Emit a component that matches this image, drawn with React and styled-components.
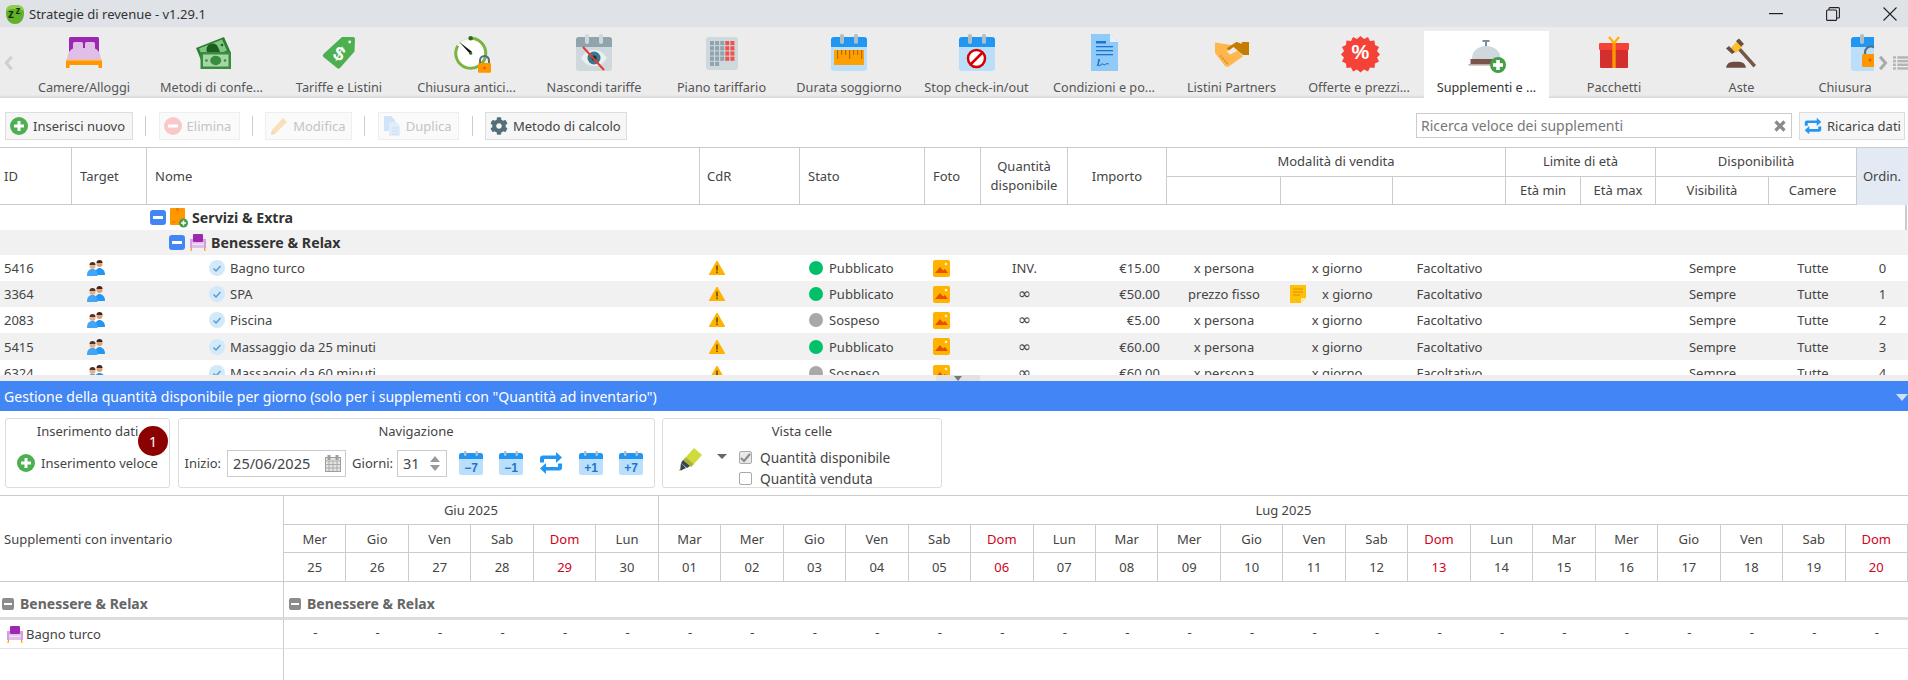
import React from "react";
import styled, { createGlobalStyle } from "styled-components";
import { FaCog } from "react-icons/fa";

const Global = createGlobalStyle`
  html, body { margin: 0; padding: 0; height: 680px; overflow: hidden; background: #fff; }
  body { font-family: "Noto Sans", "Open Sans", sans-serif; font-size: 13px; color: #444; }
  * { box-sizing: border-box; }
`;

const Page = styled.div`width: 1908px; height: 680px; overflow: hidden; display: flex; flex-direction: column;`;

/* Title bar */
const TitleBar = styled.header`height: 27px; flex: none; background: #dfe2e6; display: flex; align-items: center; padding-left: 5px; color: #333; font-size: 13px;`;
const TitleText = styled.span`margin-left: 4px; flex: 1;`;
const WinControls = styled.div`display: flex; align-items: center; gap: 43px; padding-right: 11px;`;

/* Tabs */
const TabBar = styled.nav`height: 71px; flex: none; background: #ececec; display: flex; padding-top: 4px; box-shadow: inset 0 -3px 3px -2px rgba(0,0,0,.12);`;
const ArrowSlot = styled.div`width: ${p => p.$w}px; flex: none; display: flex; align-items: center; gap: 4px; overflow: hidden; padding: 0 0 4px ${p => p.$pad || 0}px;`;
const Tabs = styled.div`flex: 1; display: flex; gap: 2.5px; overflow: hidden; min-width: 0;`;
const Tab = styled.div`width: 125px; flex: none; padding-top: 2px; display: flex; flex-direction: column; align-items: center; background: ${p => p.$active ? "#fff" : "transparent"}; color: ${p => p.$active ? "#333" : "#555"};`;
const TabIcon = styled.svg`width: 38px; height: 38px; flex: none; display: block; overflow: visible;`;
const TabLabel = styled.span`margin-top: 7px; line-height: 18px; font-size: 12.7px; white-space: nowrap; padding-right: ${p => p.$shift || 0}px;`;

/* Toolbar */
const Toolbar = styled.div`height: 49px; flex: none; display: flex; align-items: flex-start; padding: 14px 3px 0 5px;`;
const Btn = styled.button`height: 28px; width: ${p => p.$w}px; flex: none; border: 1px solid ${p => p.disabled ? "#eee" : "#ddd"}; background: ${p => p.disabled ? "#fafafa" : "#f6f6f6"}; color: ${p => p.disabled ? "#c4c4c4" : "#444"}; font: inherit; display: flex; align-items: center; gap: 5px; padding: 0 0 0 4px; white-space: nowrap;`;
const Sep = styled.span`width: 1px; height: 20px; margin: 4px 12.3px 0; background: #ccc; flex: none;`;
const Search = styled.div`margin: 1px 7px 0 auto; width: 376px; height: 25px; border: 1px solid #ccc; display: flex; align-items: center; justify-content: space-between; padding: 0 5px 0 4px; color: #777; font-size: 14px;`;

/* Main table */
const cols = "72px 75px 553px 100px 125px 56px 87px 99px 114px 112px 113px 75px 75px 113px 88px 51px";
const Head = styled.div`height: 58px; flex: none; display: grid; grid-template-columns: ${cols}; grid-template-rows: 29px 29px; border-top: 1px solid #ccc; border-bottom: 1px solid #ccc;`;
const HeadCell = styled.div`grid-row: span ${p => p.$rows || 1}; grid-column: span ${p => p.$cols || 1}; display: flex; align-items: center; justify-content: ${p => p.$left ? "flex-start" : "center"}; text-align: center; line-height: 19px; padding: 0 0 2px ${p => p.$left || 0}px; border-right: 1px solid ${p => p.$noline ? "transparent" : "#ccc"}; border-bottom: ${p => p.$rule ? "1px solid #ccc" : "0"}; background: ${p => p.$tint ? "#e3eaf4" : "transparent"};`;
const Body = styled.div`height: 170px; flex: none; overflow: hidden; position: relative;`;
const Row = styled.div`height: ${p => p.$h}px; display: grid; grid-template-columns: ${cols}; background: ${p => p.$alt ? "#f1f1f1" : "#fff"}; align-items: center;`;
const Cell = styled.div`grid-column: span ${p => p.$cols || 1}; display: flex; align-items: center; height: 100%; white-space: nowrap; justify-content: ${p => p.$right ? "flex-end" : p.$center ? "center" : "flex-start"}; padding: ${p => p.$right ? "0 7px 0 0" : `0 0 0 ${p.$pad || 0}px`}; gap: ${p => p.$gap || 0}px;`;
const GroupName = styled.b`font-weight: 700; color: #333; font-size: 14.2px;`;
const MinusBox = styled.span`width: 16px; height: 15px; border-radius: 3px; background: #4285f4; display: inline-flex; align-items: center; justify-content: center; flex: none; &::before { content: ""; width: 10px; height: 2.5px; background: #fff; }`;
const Dot = styled.span`width: 14px; height: 14px; border-radius: 50%; flex: none; background: ${p => p.$on ? "#00c06a" : "#a8a8a8"};`;
const Inf = styled.span`font-family: "DejaVu Sans", sans-serif; font-size: 16px; line-height: 16px;`;
const ScrollThumb = styled.div`position: absolute; right: 1px; top: 0; width: 2px; height: 25px; background: #ccc;`;
const Splitter = styled.div`height: 6px; flex: none; background: #eee; display: flex; justify-content: flex-start; padding-left: 936px;`;
const Grip = styled.div`width: 44px; height: 6px; background: #e2e2e2; display: flex; justify-content: center; &::before { content: ""; border: 4px solid transparent; border-top: 5px solid #777; border-bottom: 0; margin-top: 1px; }`;

/* Blue bar */
const BlueBar = styled.div`height: 30px; flex: none; background: #4285f4; color: #fff; display: flex; align-items: center; justify-content: space-between; padding: 0 0 0 4px; font-size: 14.05px; &::after { content: ""; border: 6px solid transparent; border-top: 7px solid #cfe0fb; border-bottom: 0; margin-top: 2px; }`;

/* Panels */
const PanelRow = styled.div`height: 85px; flex: none; display: flex; gap: 7.5px; padding: 7px 0 0 5px; border-bottom: 1px solid #ccc;`;
const Panel = styled.section`width: ${p => p.$w}px; height: 70px; border: 1px solid #ddd; border-radius: 3px; padding-top: 3px; position: relative; flex: none;`;
const PanelTitle = styled.div`text-align: center; line-height: 18px; height: 18px;`;
const PanelBody = styled.div`display: flex; align-items: center; height: 28px; margin-top: 9px; padding-left: ${p => p.$pad}px;`;
const Badge = styled.span`position: absolute; left: 132px; top: 7px; width: 30px; height: 30px; border-radius: 50%; background: #8b0000; color: #fff; display: flex; align-items: center; justify-content: center; font-size: 14px;`;
const Label = styled.span`margin: 0 ${p => p.$r}px 0 ${p => p.$l || 0}px; white-space: nowrap;`;
const Field = styled.div`width: ${p => p.$w}px; height: 27px; border: 1px solid #ccc; display: flex; align-items: center; justify-content: space-between; padding: 0 4px 0 5px; font-size: 14.5px; color: #444; flex: none;`;
const Spin = styled.span`display: flex; flex-direction: column; gap: 3px; margin-right: 2px; &::before, &::after { content: ""; border: 5px solid transparent; } &::before { border-top: 0; border-bottom: 6px solid #999; } &::after { border-bottom: 0; border-top: 6px solid #999; }`;
const NavIcons = styled.div`display: flex; align-items: center; gap: 16px; margin-left: 12px;`;
const VistaBody = styled.div`display: flex; align-items: flex-start; margin-top: 7px; padding-left: 16px;`;
const Caret = styled.span`margin: 7px 12px 0 14px; border: 5px solid transparent; border-top: 5px solid #666; border-bottom: 0; flex: none;`;
const Checks = styled.div`display: flex; flex-direction: column;`;
const CheckRow = styled.div`display: flex; align-items: center; gap: 8px; height: 21px; white-space: nowrap; font-size: 13.7px;`;
const Box = styled.span`width: 13px; height: 13px; border: 1px solid #aaa; border-radius: 2px; background: ${p => p.$on ? "#e8e8e8" : "#fff"}; display: flex; align-items: center; justify-content: center; flex: none;`;

/* Calendar grid */
const Cal = styled.div`flex: 1; display: grid; grid-template-columns: 284px repeat(26, 1fr); grid-template-rows: 29px 28px 29px 38px 29px 1fr;`;
const CalCorner = styled.div`grid-row: span 3; display: flex; align-items: center; padding-left: 4px; border-right: 1px solid #ccc; border-bottom: 1px solid #ccc;`;
const Month = styled.div`grid-column: span ${p => p.$n}; display: flex; align-items: center; justify-content: center; border-bottom: 1px solid #ccc; border-right: ${p => p.$end ? "0" : "1px solid #ccc"};`;
const Day = styled.div`display: flex; align-items: center; justify-content: center; border-bottom: 1px solid #ccc; border-right: 1px solid #ccc; color: ${p => p.$red ? "#d0021b" : "#444"};`;
const GroupLeft = styled.div`display: flex; align-items: center; gap: 6px; padding: 8px 0 0 2px; border-right: 1px solid #ccc; border-bottom: 3px solid #ddd; color: #666; font-weight: 700; font-size: 14px;`;
const GroupRight = styled.div`grid-column: span 26; display: flex; align-items: center; gap: 6px; padding: 8px 0 0 5px; border-bottom: 3px solid #ddd; color: #666; font-weight: 700; font-size: 14px;`;
const GrayMinus = styled.span`width: 12px; height: 12px; border-radius: 2px; background: #8c8c8c; display: inline-flex; align-items: center; justify-content: center; &::before { content: ""; width: 8px; height: 2px; background: #fff; }`;
const ItemLeft = styled.div`display: flex; align-items: center; gap: 3px; padding-left: 7px; border-right: 1px solid #ccc; border-bottom: 1px solid #e4e4e4; color: #444;`;
const Dash = styled.div`display: flex; align-items: center; justify-content: center; padding-bottom: 4px; border-bottom: 1px solid #e4e4e4;`;
const Filler = styled.div`border-right: 1px solid #ccc;`;

/* ----- icons ----- */
const Logo = () => (
  <svg width="20" height="22" viewBox="0 0 20 22">
    <path d="M10 2c6 0 9 2 9 8s-3 11-9 11S1 16 1 10s3-8 9-8z" fill="#63b02a" />
    <path d="M10 2c6 0 9 2 9 6-5-3-13-3-18 0 0-4 3-6 9-6z" fill="#8fcf4a" />
    <text x="3" y="15" fontSize="12" fontWeight="700" fill="#16300e" fontFamily="Liberation Sans">z</text>
    <text x="10.500" y="11" fontSize="10" fontWeight="700" fill="#16300e" fontFamily="Liberation Sans">z</text>
  </svg>
);
const Min = () => <svg width="14" height="2"><rect width="14" height="1.2" fill="#222" /></svg>;
const Restore = () => <svg width="14" height="14" viewBox="0 0 14 14" fill="none" stroke="#222" strokeWidth="1.1"><rect x=".6" y="3" width="10" height="10.4" rx="1" /><path d="M3 3V1.6c0-.6.4-1 1-1h8.4c.6 0 1 .4 1 1V10c0 .6-.4 1-1 1H10.600" /></svg>;
const Close = () => <svg width="14" height="14" viewBox="0 0 14 14" stroke="#222" strokeWidth="1.1"><path d="M.5.5l13 13M13.500.5l-13 13" /></svg>;

const Chev = ({ d, c }) => <svg width="12" height="16" viewBox="0 0 12 18" fill="none" stroke={c} strokeWidth="3.5"><path d={d} /></svg>;
const ListIco = () => (
  <svg width="16" height="14" viewBox="0 0 16 14" fill="#b4b4b4"><rect width="3" height="2.500" /><rect y="3.800" width="3" height="2.500" /><rect y="7.600" width="3" height="2.500" /><rect y="11.400" width="3" height="2.500" /><rect x="4.500" width="12" height="2.500" /><rect x="4.500" y="3.800" width="12" height="2.500" /><rect x="4.500" y="7.600" width="12" height="2.500" /><rect x="4.500" y="11.400" width="12" height="2.500" /></svg>
);

const CalBase = ({ children, gray }) => (
  <>
    <rect x="1" y="4" width="36" height="34" rx="3" fill={gray ? "#cfd8dc" : "#bbdefb"} />
    <path d="M1 14V7a3 3 0 013-3h30a3 3 0 013 3v7z" fill={gray ? "#90a4ae" : "#2196f3"} />
    <rect x="10" y="1" width="4" height="10" rx="2" fill={gray ? "#cfd8dc" : "#b0bec5"} />
    <rect x="24" y="1" width="4" height="10" rx="2" fill={gray ? "#cfd8dc" : "#b0bec5"} />
    {children}
  </>
);

const icons = {
  bed: (
    <>
      <rect x="4" y="4" width="30" height="20" rx="1.500" fill="#9c27b0" />
      <rect x="8" y="9" width="10" height="8" rx="1.500" fill="#e1bee7" /><rect x="20" y="9" width="10" height="8" rx="1.500" fill="#e1bee7" />
      <path d="M2 28c0-8 4-13 8-13h18c4 0 8 5 8 13z" fill="#e1bee7" />
      <rect x="1" y="27" width="36" height="5" fill="#ff9800" /><rect x="1" y="26.500" width="36" height="1.500" fill="#ffb74d" />
      <rect x="1" y="31" width="3.500" height="4" fill="#ff9800" /><rect x="33.500" y="31" width="3.500" height="4" fill="#ff9800" />
    </>
  ),
  money: (
    <>
      <path d="M3 15L31 4l7 16-28 12z" fill="#2e7d32" />
      <path d="M6 15.500L29 6.500l5 11-23 10z" fill="#81c784" />
      <path d="M14 19a6 6 0 0111-5l2 5z" fill="#1b5e20" />
      <circle cx="29" cy="12" r="1.300" fill="#1b5e20" />
      <rect x="7.500" y="19" width="30.500" height="17" fill="#388e3c" />
      <rect x="10" y="21.500" width="25.500" height="12" fill="#a5d6a7" />
      <ellipse cx="22.700" cy="27.500" rx="5.500" ry="4.700" fill="#388e3c" />
      <circle cx="13.500" cy="27.500" r="1.300" fill="#388e3c" /><circle cx="32" cy="27.500" r="1.300" fill="#388e3c" />
    </>
  ),
  tag: (
    <>
      <path d="M3.500 21L22 4h11q2 0 2 2l-.5 12.500L20 35q-1.500 1.500-3 0L3.500 24q-1.500-1.500 0-3z" fill="#4caf50" />
      <circle cx="29.700" cy="9" r="1.400" fill="#f1f8e9" />
      <text x="19" y="27" fontSize="19" fontWeight="700" fill="#fff" textAnchor="middle" fontFamily="Liberation Sans" transform="rotate(25 19 21)">$</text>
    </>
  ),
  timer: (
    <>
      <circle cx="22.700" cy="20.300" r="15" fill="#fff" />
      <path d="M22.700 5.300A15 15 0 1 1 11 11" fill="none" stroke="#7cb342" strokeWidth="3" transform="rotate(-8 22.700 20.300)" />
      <path d="M22.700 5.300a15 15 0 0 0-11.700 5.500" fill="none" stroke="#dcedc8" strokeWidth="1.500" />
      <circle cx="22.700" cy="5.300" r="2.200" fill="#33691e" />
      <path d="M11 8.700l13 10-2 2z" fill="#111" />
      <circle cx="22.700" cy="20.300" r="1.500" fill="#33691e" />
      <path d="M32 31v-3.500a4.500 4.500 0 019 0V31" fill="none" stroke="#546e7a" strokeWidth="2" />
      <rect x="30" y="30" width="13" height="9.700" rx="1" fill="#ff9800" /><circle cx="36.500" cy="35" r="1.200" fill="#e65100" />
    </>
  ),
  hide: (
    <CalBase gray>
      <path d="M6 25c4-6 8-8 13-8s9 2 13 8c-4 6-8 8-13 8s-9-2-13-8z" fill="#eceff1" />
      <circle cx="19" cy="25" r="6.500" fill="#37788a" /><circle cx="19" cy="25" r="2.500" fill="#16323c" />
      <path d="M8 14l21 23" stroke="#e53935" strokeWidth="2" />
    </CalBase>
  ),
  grid: (
    <>
      <rect x="3" y="4" width="32" height="33" rx="3" fill="#cfd8dc" />
      {[0,1,2,3,4].map(r => [0,1,2,3,4].map(c => (r === 4 && c > 1) ? null : (
        <rect key={`${r}${c}`} x={7 + c * 5.100} y={8 + r * 5.200} width="4" height="4.200" fill={c >= 3 && r < 4 ? "#ef5350" : "#90a4ae"} />
      )))}
    </>
  ),
  ruler: (
    <CalBase>
      <rect x="4" y="17" width="30" height="15" fill="#ffa000" />
      {[7,11,15,19,23,27,31].map((x, i) => <rect key={x} x={x} y="17" width="1.200" height={i % 3 === 0 ? 9 : 5} fill="#b56a00" />)}
    </CalBase>
  ),
  stop: (
    <CalBase>
      <circle cx="18.500" cy="25.500" r="8.500" fill="#fff" stroke="#d50000" strokeWidth="2.500" />
      <path d="M13 31l11-11" stroke="#d50000" strokeWidth="2.500" />
    </CalBase>
  ),
  doc: (
    <>
      <path d="M6 1h19l8 8v29H6z" fill="#90caf9" /><path d="M25 1l8 8h-8z" fill="#e3f2fd" />
      <rect x="11" y="8" width="10" height="2.500" fill="#1976d2" />
      <rect x="11" y="13" width="17" height="1.300" fill="#1976d2" /><rect x="11" y="17" width="17" height="1.300" fill="#1976d2" /><rect x="11" y="21" width="17" height="1.300" fill="#1976d2" />
      <path d="M12 33c2-3 3-7 2-7s-1 7 0 7 3-3 4-2 2 1 3 0 2 0 3 0" fill="none" stroke="#1565c0" strokeWidth="1" />
    </>
  ),
  hands: (
    <>
      <path d="M2 9.500l13 2 6 1-7 6 3 3 8-4 5 6-3 2-12 8.500-3-1-10-13z" fill="#ffb74d" />
      <path d="M13.700 15.300L23.700 8.700l5 2.300V9H36v13h-6l-9.500-8-4.500 3.500z" fill="#c67c00" />
      <g fill="#e09a3c"><circle cx="8" cy="23" r="1.200" /><circle cx="10" cy="25.500" r="1.200" /><circle cx="12" cy="28" r="1.200" /><circle cx="14" cy="30" r="1.200" /></g>
    </>
  ),
  offer: (
    <g transform="translate(1.500 0)">
      <path d="M19 3l3.500 3 4-2 2 4 4.500-.5.500 4.500 4 2-2 4 3 3.500-3 3 2 4-4 2-.5 4.500-4.500-.5-2 4-4-2-3.500 3-3.500-3-4 2-2-4-4.500.5-.5-4.500-4-2 2-4-3-3 3-3.500-2-4 4-2 .5-4.500 4.500.5 2-4 4 2z" fill="#f44336" />
      <text x="19" y="26" fontSize="20" fontWeight="700" fill="#fff" textAnchor="middle" fontFamily="Liberation Sans">%</text>
    </g>
  ),
  bell: (
    <>
      <rect x="14.500" y="7" width="7" height="2" fill="#78909c" /><rect x="17" y="8" width="2" height="6" fill="#78909c" />
      <path d="M4 26c0-8 6-13 14-13s14.700 5 14.700 13z" fill="#cfd8dc" />
      <rect x="2.500" y="26" width="26" height="5" fill="#795548" /><rect x="0.500" y="31" width="28" height="1.600" fill="#bcaaa4" />
      <circle cx="30" cy="32" r="8" fill="#43a047" />
      <rect x="28.200" y="27" width="3.600" height="10" fill="#fff" /><rect x="25" y="30.200" width="10" height="3.600" fill="#fff" />
    </>
  ),
  gift: (
    <>
      <path d="M19 10L14 4M19 10l5-6" stroke="#ffb300" strokeWidth="2.200" fill="none" />
      <rect x="5" y="16" width="28" height="19" rx="1" fill="#d32f2f" /><rect x="4" y="10" width="30" height="7" rx="1" fill="#f44336" />
      <rect x="17.300" y="10" width="3.400" height="25" fill="#ff9800" />
    </>
  ),
  gavel: (
    <>
      <path d="M14 16l2.500-2.500L33 32l-2.500 2.500z" fill="#795548" />
      <path d="M7 16L14 8l6 5-7 7z" fill="#fbc02d" />
      <path d="M3 15.500l3-2.500 6 6-3 2zM13 8l3-2.500 5 5.500-3 2.500z" fill="#6d4c41" />
      <path d="M3 34.700q1-6 7-6h6q6 0 7 6z" fill="#6d4c41" />
    </>
  ),
  lockcal: (
    <>
      <CalBase />
      <path d="M15 22v-2.500a6 6 0 0112 0V22" fill="none" stroke="#546e7a" strokeWidth="2.200" />
      <rect x="12" y="21" width="18" height="13" rx="1.500" fill="#ff9800" />
      <circle cx="20" cy="27" r="1.400" fill="#e65100" />
    </>
  ),
};

const tabs = [
  ["bed", "Camere/Alloggi"], ["money", "Metodi di confe..."], ["tag", "Tariffe e Listini"], ["timer", "Chiusura antici..."],
  ["hide", "Nascondi tariffe"], ["grid", "Piano tariffario"], ["ruler", "Durata soggiorno"], ["stop", "Stop check-in/out"],
  ["doc", "Condizioni e po..."], ["hands", "Listini Partners"], ["offer", "Offerte e prezzi..."], ["bell", "Supplementi e ...", true],
  ["gift", "Pacchetti"], ["gavel", "Aste"], ["lockcal", "Chiusura", false, 48],
];

const PlusCircle = ({ s = 18 }) => (
  <svg width={s} height={s} viewBox="0 0 18 18"><circle cx="9" cy="9" r="9" fill="#4caf50" /><rect x="7.500" y="4" width="3" height="10" fill="#fff" /><rect x="4" y="7.500" width="10" height="3" fill="#fff" /></svg>
);
const MinusCircle = () => <svg width="18" height="18" viewBox="0 0 18 18"><circle cx="9" cy="9" r="9" fill="#f9c9c9" /><rect x="4" y="7.500" width="10" height="3" fill="#fff" /></svg>;
const Pencil = () => <svg width="18" height="18" viewBox="0 0 18 18"><path d="M13 1l4 4L5 17l-4 1 1-5z" fill="#f8e0b8" /><path d="M1 18l1-5 3 3z" fill="#eadcc4" /></svg>;
const CopyDoc = () => <svg width="18" height="20" viewBox="0 0 18 20"><path d="M1 0h7l4 4v11H1z" fill="#cfe3fa" /><path d="M6 6h7l4 4v10H6z" fill="#e0ecf9" /><path d="M9 12h6M9 15h6M9 18h6" stroke="#c6dcf5" strokeWidth="1" /></svg>;
const XMark = () => <svg width="12" height="12" viewBox="0 0 12 12" stroke="#8a8a8a" strokeWidth="3.200"><path d="M1.500 1.500l9 9M10.500 1.500l-9 9" /></svg>;
const Swap = ({ w, h }) => (
  <svg width={w} height={h} viewBox="0 0 24 24" fill="#2196f3">
    <path d="M1 11.500V7.500a3 3 0 013-3h13V1l6 5.500-6 5.500V8H5v3.500z" />
    <path d="M23 12.500v4a3 3 0 01-3 3H7V23l-6-5.500L7 12v4h12v-3.500z" />
  </svg>
);

const Persons = () => (
  <svg width="18" height="16" viewBox="0 0 18 16">
    <circle cx="12.500" cy="4" r="3" fill="#e0a070" /><path d="M9.500 3a3 3 0 016 0z" fill="#3e2723" /><path d="M8 15c0-5 2-7 4.500-7S18 10 18 15z" fill="#2196f3" />
    <circle cx="5.500" cy="6" r="3" fill="#e8b088" /><path d="M2.500 5a3 3 0 016 0z" fill="#4e342e" /><path d="M0 16c0-5 2-7 5.500-7s5 2 5 7z" fill="#42a5f5" />
  </svg>
);
const Check = () => <svg width="16" height="16" viewBox="0 0 16 16"><circle cx="8" cy="8" r="8" fill="#d2e9f9" /><path d="M4.500 8.500l2.500 2.500 4.500-5" fill="none" stroke="#5b9bd5" strokeWidth="1.500" /></svg>;
const Warn = () => <svg width="16" height="14" viewBox="0 0 16 14"><path d="M8 0l8 14H0z" fill="#ffb300" stroke="#ffb300" strokeLinejoin="round" /><rect x="7.200" y="4.500" width="1.600" height="5" fill="#6d4c00" /><rect x="7.200" y="10.500" width="1.600" height="1.600" fill="#6d4c00" /></svg>;
const Photo = () => <svg width="17" height="17" viewBox="0 0 17 17"><rect width="17" height="17" rx="2" fill="#ffb300" /><path d="M2 13l5-6 3 3.500 2-1.500 3 4z" fill="#e65100" /><circle cx="13" cy="4" r="1.300" fill="#fff3c4" /></svg>;
const Note = () => <svg width="16" height="18" viewBox="0 0 16 18"><path d="M0 0h16v13l-5 5H0z" fill="#ffc107" /><path d="M3 4h10M3 7h10M3 10h7" stroke="#e09000" strokeWidth="1" /><path d="M11 18v-5h5z" fill="#ffe9a8" /></svg>;
const Box3d = () => <svg width="18" height="20" viewBox="0 0 18 20"><rect width="15" height="17" y="0" rx="1" fill="#ff9800" /><rect x="6" width="3" height="3" fill="#f57c00" /><rect x="2" y="13" width="3" height="2" fill="#e08a00" /><circle cx="13.500" cy="15" r="4.500" fill="#43a047" /><path d="M11 15h5M13.500 12.500v5" stroke="#fff" strokeWidth="1.500" /></svg>;
const Armchair = () => (
  <svg width="16" height="17" viewBox="0 0 16 17"><rect x="3" y="0" width="10" height="8" rx="1" fill="#9c27b0" /><rect x="0" y="5" width="3" height="9" fill="#d99be2" /><rect x="13" y="5" width="3" height="9" fill="#d99be2" /><rect x="2" y="8" width="12" height="6" fill="#e1bee7" /><rect x="2" y="9.500" width="12" height="1.500" fill="#f0dff3" /><path d="M1.500 14L1 17M14.500 14l.5 3" stroke="#ff9800" strokeWidth="1.200" /></svg>
);
const DateCal = () => <svg width="16" height="17" viewBox="0 0 16 17" fill="none" stroke="#9e9e9e"><rect x=".5" y="2.500" width="15" height="14" fill="#e8e4e0" /><path d="M.5 6h15M.5 9.500h15M.5 13h15M4 6v10.500M8 6v10.500M12 6v10.500" strokeWidth=".8" /><rect x="3" y=".5" width="2" height="4" fill="#9e9e9e" /><rect x="11" y=".5" width="2" height="4" fill="#9e9e9e" /></svg>;
const NavCal = ({ t }) => (
  <svg width="24" height="24" viewBox="0 0 24 24">
    <rect x="0" y="2" width="24" height="22" rx="2.500" fill="#bbdefb" />
    <path d="M0 8V4.500A2.500 2.500 0 012.500 2h19A2.500 2.500 0 0124 4.500V8z" fill="#2196f3" />
    <rect x="5" y="0" width="2.500" height="5" rx="1" fill="#b0bec5" /><rect x="16.500" y="0" width="2.500" height="5" rx="1" fill="#b0bec5" />
    <text x="12" y="20.500" fontSize="12" fontWeight="700" fill="#1976d2" textAnchor="middle" fontFamily="Liberation Sans">{t}</text>
  </svg>
);
const Highlighter = () => (
  <svg width="24" height="24" viewBox="0 0 24 24"><path d="M15 1l8 7-8 9-8-7z" fill="#cddc39" /><path d="M7 10l8 7-3 3-8-7z" fill="#afb42b" /><path d="M4 13l7 6-3 2-6-5z" fill="#37474f" /><path d="M2 16l5 5-6 3z" fill="#37474f" /><path d="M0 22l3 2H0z" fill="#cddc39" /></svg>
);
const Tick = () => <svg width="11" height="10" viewBox="0 0 11 10"><path d="M1 5l3 3 6-7" fill="none" stroke="#888" strokeWidth="2" /></svg>;

const rows = [
  ["5416", "Bagno turco", true, "INV.", "€15.00", "x persona", "0"],
  ["3364", "SPA", true, "∞", "€50.00", "prezzo fisso", "1"],
  ["2083", "Piscina", false, "∞", "€5.00", "x persona", "2"],
  ["5415", "Massaggio da 25 minuti", true, "∞", "€60.00", "x persona", "3"],
  ["6324", "Massaggio da 60 minuti", false, "∞", "€60.00", "x persona", "4"],
];
const heights = [26, 26, 26, 27, 26];

const days = ["Mer","Gio","Ven","Sab","Dom","Lun","Mar","Mer","Gio","Ven","Sab","Dom","Lun","Mar","Mer","Gio","Ven","Sab","Dom","Lun","Mar","Mer","Gio","Ven","Sab","Dom"];
const dates = ["25","26","27","28","29","30","01","02","03","04","05","06","07","08","09","10","11","12","13","14","15","16","17","18","19","20"];

export default function App() {
  return (
    <Page>
      <Global />
      <TitleBar>
        <Logo />
        <TitleText>Strategie di revenue - v1.29.1</TitleText>
        <WinControls><Min /><Restore /><Close /></WinControls>
      </TitleBar>

      <TabBar>
        <ArrowSlot $w={21.5} $pad={3}><Chev c="#cfcfcf" d="M9 2L3 9l6 7" /></ArrowSlot>
        <Tabs>
          {tabs.map(([k, label, active, shift]) => (
            <Tab key={label} $active={active}>
              <TabIcon viewBox="0 0 38 38">{icons[k]}</TabIcon>
              <TabLabel $shift={shift}>{label}</TabLabel>
            </Tab>
          ))}
        </Tabs>
        <ArrowSlot $w={34} $pad={3}><Chev c="#aaa" d="M3 2l6 7-6 7" /><ListIco /></ArrowSlot>
      </TabBar>

      <Toolbar>
        <Btn $w={128}><PlusCircle />Inserisci nuovo</Btn>
        <Sep />
        <Btn $w={81} disabled><MinusCircle />Elimina</Btn>
        <Sep />
        <Btn $w={87} disabled><Pencil />Modifica</Btn>
        <Sep />
        <Btn $w={81.5} disabled><CopyDoc />Duplica</Btn>
        <Sep />
        <Btn $w={142}><FaCog size={18} color="#546e7a" />Metodo di calcolo</Btn>
        <Search>Ricerca veloce dei supplementi<XMark /></Search>
        <Btn $w={106}><Swap w={18} h={18} />Ricarica dati</Btn>
      </Toolbar>

      <Head>
        <HeadCell $rows={2} $left={4}>ID</HeadCell>
        <HeadCell $rows={2} $left={8}>Target</HeadCell>
        <HeadCell $rows={2} $left={8}>Nome</HeadCell>
        <HeadCell $rows={2} $left={7}>CdR</HeadCell>
        <HeadCell $rows={2} $left={8}>Stato</HeadCell>
        <HeadCell $rows={2} $left={8}>Foto</HeadCell>
        <HeadCell $rows={2}>Quantità<br />disponibile</HeadCell>
        <HeadCell $rows={2}>Importo</HeadCell>
        <HeadCell $cols={3} $rule>Modalità di vendita</HeadCell>
        <HeadCell $cols={2} $rule>Limite di età</HeadCell>
        <HeadCell $cols={2} $rule>Disponibilità</HeadCell>
        <HeadCell $rows={2} $tint $noline>Ordin.</HeadCell>
        <HeadCell /><HeadCell /><HeadCell />
        <HeadCell>Età min</HeadCell>
        <HeadCell>Età max</HeadCell>
        <HeadCell>Visibilità</HeadCell>
        <HeadCell>Camere</HeadCell>
      </Head>

      <Body>
        <ScrollThumb />
        <Row $h={25}>
          <Cell $cols={2} />
          <Cell $cols={14} $pad={3} $gap={4}><MinusBox /><Box3d /><GroupName>Servizi &amp; Extra</GroupName></Cell>
        </Row>
        <Row $h={25} $alt>
          <Cell $cols={2} />
          <Cell $cols={14} $pad={22} $gap={5}><MinusBox /><Armchair /><GroupName>Benessere &amp; Relax</GroupName></Cell>
        </Row>
        {rows.map((r, i) => (
          <Row key={r[0]} $h={heights[i]} $alt={i % 2 === 1}>
            <Cell $pad={4}>{r[0]}</Cell>
            <Cell $pad={15}><Persons /></Cell>
            <Cell $pad={62} $gap={5}><Check />{r[1]}</Cell>
            <Cell $pad={9}><Warn /></Cell>
            <Cell $pad={9} $gap={6}><Dot $on={r[2]} />{r[2] ? "Pubblicato" : "Sospeso"}</Cell>
            <Cell $pad={8}><Photo /></Cell>
            <Cell $center>{r[3] === "∞" ? <Inf>∞</Inf> : r[3]}</Cell>
            <Cell $right>{r[4]}</Cell>
            <Cell $center>{r[5]}</Cell>
            {i === 1
              ? <Cell $pad={9} $gap={16}><Note />x giorno</Cell>
              : <Cell $center>x giorno</Cell>}
            <Cell $center>Facoltativo</Cell>
            <Cell /><Cell />
            <Cell $center>Sempre</Cell>
            <Cell $center>Tutte</Cell>
            <Cell $center>{r[6]}</Cell>
          </Row>
        ))}
      </Body>
      <Splitter><Grip /></Splitter>

      <BlueBar>Gestione della quantità disponibile per giorno (solo per i supplementi con "Quantità ad inventario")</BlueBar>

      <PanelRow>
        <Panel $w={165}>
          <PanelTitle>Inserimento dati</PanelTitle>
          <Badge>1</Badge>
          <PanelBody $pad={11}><PlusCircle /><Label $l={6} $r={0}>Inserimento veloce</Label></PanelBody>
        </Panel>
        <Panel $w={477}>
          <PanelTitle>Navigazione</PanelTitle>
          <PanelBody $pad={6}>
            <Label $r={6}>Inizio:</Label>
            <Field $w={119}>25/06/2025<DateCal /></Field>
            <Label $l={6} $r={4}>Giorni:</Label>
            <Field $w={50}>31<Spin /></Field>
            <NavIcons>
              <NavCal t="−7" />
              <NavCal t="−1" />
              <Swap w={24} h={24} />
              <NavCal t="+1" />
              <NavCal t="+7" />
            </NavIcons>
          </PanelBody>
        </Panel>
        <Panel $w={280}>
          <PanelTitle>Vista celle</PanelTitle>
          <VistaBody>
            <Highlighter />
            <Caret />
            <Checks>
              <CheckRow><Box $on><Tick /></Box>Quantità disponibile</CheckRow>
              <CheckRow><Box />Quantità venduta</CheckRow>
            </Checks>
          </VistaBody>
        </Panel>
      </PanelRow>

      <Cal>
        <CalCorner>Supplementi con inventario</CalCorner>
        <Month $n={6}>Giu 2025</Month>
        <Month $n={20} $end>Lug 2025</Month>
        {days.map((d, i) => <Day key={`d${i}`} $red={d === "Dom"}>{d}</Day>)}
        {dates.map((d, i) => <Day key={`n${i}`} $red={days[i] === "Dom"}>{d}</Day>)}
        <GroupLeft><GrayMinus />Benessere &amp; Relax</GroupLeft>
        <GroupRight><GrayMinus />Benessere &amp; Relax</GroupRight>
        <ItemLeft><Armchair />Bagno turco</ItemLeft>
        {dates.map((d, i) => <Dash key={`x${i}`}>-</Dash>)}
        <Filler />
      </Cal>
    </Page>
  );
}
